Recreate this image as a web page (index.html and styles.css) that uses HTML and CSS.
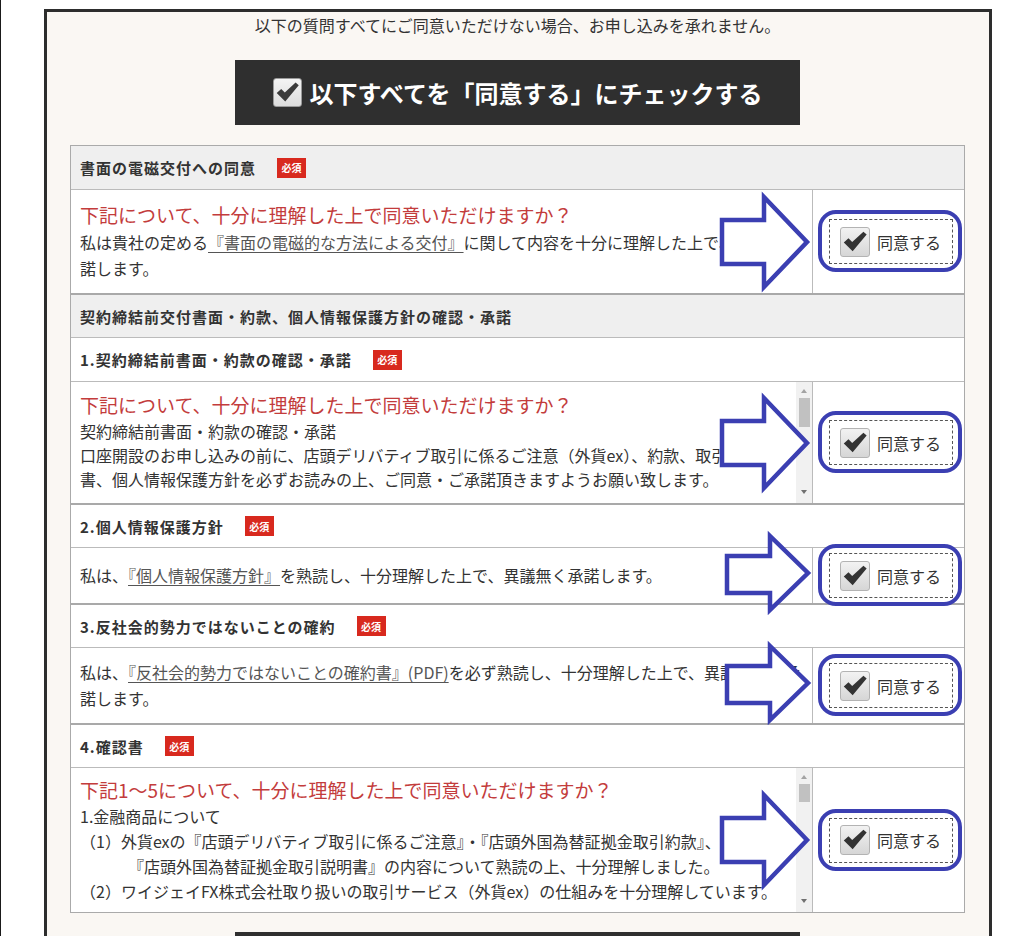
FILE: index.html
```html
<!DOCTYPE html>
<html lang="ja">
<head>
<meta charset="utf-8">
<title>同意確認</title>
<link rel="stylesheet" href="styles.css">
</head>
<body>
<div class="page">
  <div class="panel">
    <p class="notice">以下の質問すべてにご同意いただけない場合、お申し込みを承れません。</p>

    <div class="all-agree">
      <span class="cb cb-lg"><svg viewBox="0 0 30 30"><path d="M3 15.5 L8 11 L12 15 L24 4 L27.5 7 L12.5 25 Z"/></svg></span>
      <span>以下すべてを「同意する」にチェックする</span>
    </div>

    <div class="agree-table">
      <div class="head main first">書面の電磁交付への同意<span class="req">必須</span></div>
      <div class="row">
        <div class="txt">
          <p class="q">下記について、十分に理解した上で同意いただけますか？</p>
          <p>私は貴社の定める<a class="doc">『書面の電磁的な方法による交付』</a>に関して内容を十分に理解した上で、これを承諾します。</p>
        </div>
        <div class="check">
          <label class="agree"><span class="cb"><svg viewBox="0 0 30 30"><path d="M3 15.5 L8 11 L12 15 L24 4 L27.5 7 L12.5 25 Z"/></svg></span>同意する<span class="mark"></span></label>
        </div>
        <svg class="arrow" width="93" height="98" viewBox="0 0 93 98"><polygon points="4,27 46,27 46,4 89,49 46,94 46,71 4,71"/></svg>
      </div>

      <div class="head main">契約締結前交付書面・約款、個人情報保護方針の確認・承諾</div>
      <div class="head sub-first">1.契約締結前書面・約款の確認・承諾<span class="req">必須</span></div>
      <div class="row">
        <div class="scroll">
          <div class="scroll-body">
            <p class="q">下記について、十分に理解した上で同意いただけますか？</p>
            <p>契約締結前書面・約款の確認・承諾</p>
            <p>口座開設のお申し込みの前に、店頭デリバティブ取引に係るご注意（外貨ex）、約款、取引説明書、個人情報保護方針を必ずお読みの上、ご同意・ご承諾頂きますようお願い致します。</p>
          </div>
          <div class="sbar"><span class="sb-up"></span><span class="sb-thumb" style="height:29px"></span><span class="sb-down"></span></div>
        </div>
        <div class="check">
          <label class="agree"><span class="cb"><svg viewBox="0 0 30 30"><path d="M3 15.5 L8 11 L12 15 L24 4 L27.5 7 L12.5 25 Z"/></svg></span>同意する<span class="mark"></span></label>
        </div>
        <svg class="arrow" width="93" height="98" viewBox="0 0 93 98"><polygon points="4,27 46,27 46,4 89,49 46,94 46,71 4,71"/></svg>
      </div>

      <div class="head">2.個人情報保護方針<span class="req">必須</span></div>
      <div class="row">
        <div class="txt">
          <p>私は、<a class="doc">『個人情報保護方針』</a>を熟読し、十分理解した上で、異議無く承諾します。</p>
        </div>
        <div class="check">
          <label class="agree"><span class="cb"><svg viewBox="0 0 30 30"><path d="M3 15.5 L8 11 L12 15 L24 4 L27.5 7 L12.5 25 Z"/></svg></span>同意する<span class="mark"></span></label>
        </div>
        <svg class="arrow arrow-sm" width="88" height="80" viewBox="0 0 88 80"><polygon points="4,23 47,23 47,3 85,40 47,77 47,60 4,60"/></svg>
      </div>

      <div class="head">3.反社会的勢力ではないことの確約<span class="req">必須</span></div>
      <div class="row">
        <div class="txt">
          <p>私は、<a class="doc">『反社会的勢力ではないことの確約書』(PDF)</a>を必ず熟読し、十分理解した上で、異議無く、承諾します。</p>
        </div>
        <div class="check">
          <label class="agree"><span class="cb"><svg viewBox="0 0 30 30"><path d="M3 15.5 L8 11 L12 15 L24 4 L27.5 7 L12.5 25 Z"/></svg></span>同意する<span class="mark"></span></label>
        </div>
        <svg class="arrow arrow-sm" width="88" height="80" viewBox="0 0 88 80"><polygon points="4,23 47,23 47,3 85,40 47,77 47,60 4,60"/></svg>
      </div>

      <div class="head">4.確認書<span class="req">必須</span></div>
      <div class="row">
        <div class="scroll tall">
          <div class="scroll-body">
            <p class="q">下記1～5について、十分に理解した上で同意いただけますか？</p>
            <p>1.金融商品について</p>
            <p class="hang">（1）外貨exの『店頭デリバティブ取引に係るご注意』・『店頭外国為替証拠金取引約款』、<br>『店頭外国為替証拠金取引説明書』の内容について熟読の上、十分理解しました。</p>
            <p class="hang">（2）ワイジェイFX株式会社取り扱いの取引サービス（外貨ex）の仕組みを十分理解しています。</p>
          </div>
          <div class="sbar"><span class="sb-up"></span><span class="sb-thumb" style="height:18px"></span><span class="sb-down"></span></div>
        </div>
        <div class="check">
          <label class="agree"><span class="cb"><svg viewBox="0 0 30 30"><path d="M3 15.5 L8 11 L12 15 L24 4 L27.5 7 L12.5 25 Z"/></svg></span>同意する<span class="mark"></span></label>
        </div>
        <svg class="arrow" width="93" height="98" viewBox="0 0 93 98"><polygon points="4,27 46,27 46,4 89,49 46,94 46,71 4,71"/></svg>
      </div>
    </div>

    <div class="next"></div>
  </div>
</div>
</body>
</html>
```

FILE: styles.css
```css
* {
  box-sizing: border-box;
}

html,
body {
  margin: 0;
  padding: 0;
}

body {
  width: 1029px;
  height: 936px;
  overflow: hidden;
  background: #ffffff;
  border-left: 1px solid #1a1a1a;
  font-family: "Noto Sans CJK JP", "Noto Sans", sans-serif;
  color: #333333;
  font-size: 16px;
}

p {
  margin: 0;
}

.page {
  padding: 9px 0 0 43px;
}

.panel {
  width: 948px;
  min-height: 940px;
  border: 3px solid #2d2d2d;
  border-bottom: 0;
  background: #faf7f3;
  padding: 0 24px 0 23px;
}

.notice {
  text-align: center;
  line-height: 26px;
  font-size: 16px;
  color: #333333;
}

.all-agree {
  display: flex;
  align-items: center;
  justify-content: center;
  gap: 8px;
  width: 565px;
  height: 65px;
  margin: 22px auto 0;
  background: #2f2f2f;
  color: #ffffff;
  font-size: 24px;
  font-weight: 700;
  letter-spacing: 0;
}

/* checkbox */
.cb {
  display: inline-flex;
  flex: none;
  width: 30px;
  height: 30px;
  border: 1px solid #b3b3b3;
  border-radius: 3px;
  background: linear-gradient(#f2f2f2, #d6d6d6);
}

.cb svg {
  width: 100%;
  height: 100%;
  fill: #333333;
}

.cb-lg {
  width: 29px;
  height: 29px;
  border-color: #9a9a9a;
  background: linear-gradient(#f4f4f4, #dcdcdc);
}

.cb-lg svg {
  fill: #3a3a3a;
}

/* table */
.agree-table {
  margin-top: 20px;
  border: 1px solid #aaaaaa;
  background: #ffffff;
}

.head {
  display: flex;
  align-items: center;
  height: 44px;
  padding-left: 9px;
  border-top: 2px solid #a9a9a9;
  background: #ffffff;
  font-size: 15px;
  font-weight: 700;
  letter-spacing: 1px;
  color: #333333;
}

.head.main {
  background: #efefef;
}

.head.first {
  border-top: 0;
  height: 43px;
}

.head.sub-first {
  border-top: 1px solid #bbbbbb;
}

.req {
  display: inline-flex;
  align-items: center;
  justify-content: center;
  width: 29px;
  height: 20px;
  margin-left: 21px;
  background: #d8291e;
  color: #ffffff;
  font-size: 10px;
  font-weight: 700;
  letter-spacing: 0;
}

.row {
  position: relative;
  display: grid;
  grid-template-columns: 1fr 152px;
  border-top: 1px solid #bbbbbb;
}

.txt {
  display: flex;
  flex-direction: column;
  justify-content: center;
  padding: 11px 10px 12px 9px;
  line-height: 26px;
}

.q {
  font-size: 19px;
  line-height: 28px;
  color: #c33c3c;
}

.doc {
  color: #555555;
  text-decoration: underline;
  text-underline-offset: 3px;
}

/* scroll box */
.scroll {
  display: flex;
  height: 121px;
}

.scroll.tall {
  height: 144px;
}

.scroll-body {
  flex: 1;
  overflow: hidden;
  padding: 9px 6px 0 9px;
  line-height: 24px;
}

.scroll.tall .scroll-body {
  padding-top: 8px;
  line-height: 25px;
}

.hang {
  padding-left: 3em;
  text-indent: -3em;
}

.sbar {
  display: flex;
  flex-direction: column;
  align-items: center;
  width: 16px;
  flex: none;
  padding: 7px 0 9px;
  background: #f1f1f1;
}

.sb-up {
  width: 0;
  height: 0;
  border-left: 3.5px solid transparent;
  border-right: 3.5px solid transparent;
  border-bottom: 4px solid #a3a3a3;
}

.sb-thumb {
  width: 11px;
  margin-top: 5px;
  background: #c1c1c1;
}

.sb-down {
  width: 0;
  height: 0;
  margin-top: auto;
  border-left: 3.5px solid transparent;
  border-right: 3.5px solid transparent;
  border-top: 4px solid #707070;
}

/* agree cell */
.check {
  display: flex;
  align-items: center;
  min-height: 55px;
  padding-left: 16px;
  border-left: 1px solid #bbbbbb;
}

.agree {
  position: relative;
  display: flex;
  align-items: center;
  gap: 7px;
  width: 124px;
  height: 45px;
  padding-left: 10px;
  border: 1px dashed #555555;
  font-size: 16px;
  color: #333333;
}

.mark {
  position: absolute;
  left: -12px;
  top: -10px;
  right: -10px;
  bottom: -9px;
  border: 4px solid #3b3fb2;
  border-radius: 18px;
  pointer-events: none;
}

.arrow {
  position: absolute;
  right: 153px;
  top: 50%;
  transform: translateY(-50%);
  overflow: visible;
  pointer-events: none;
}

.arrow polygon {
  fill: #ffffff;
  stroke: #3b3fb2;
  stroke-width: 4.5;
  stroke-linejoin: miter;
}

.arrow-sm {
  transform: translateY(calc(-50% - 3px));
}

.next {
  width: 565px;
  height: 60px;
  margin: 19px auto 0;
  background: #2f2f2f;
}
```
